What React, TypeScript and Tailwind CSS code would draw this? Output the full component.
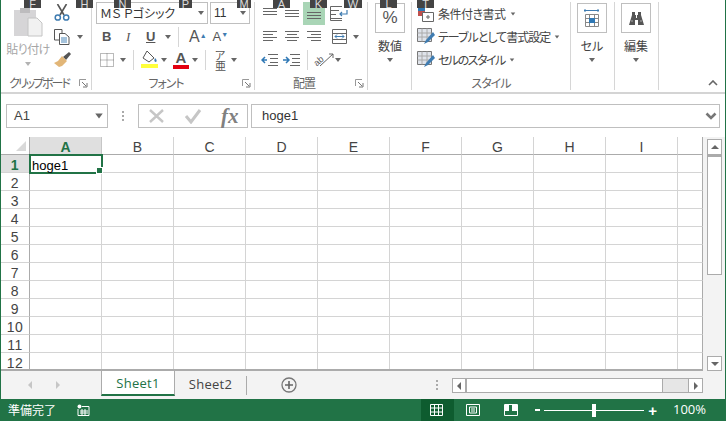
import React from "react"

const jp = "[font-family:'Noto_Sans_CJK_JP','Liberation_Sans',sans-serif] [font-feature-settings:'palt']"
const COLS = ["A", "B", "C", "D", "E", "F", "G", "H", "I"]
const ROWS = [1, 2, 3, 4, 5, 6, 7, 8, 9, 10, 11, 12]

const Caret = ({ className = "" }: { className?: string }) => (
  <span className={`inline-block w-0 h-0 border-x-[3.5px] border-x-transparent border-t-[4px] border-t-[#666] ${className}`} />
)

const Launcher = () => (
  <svg width="9" height="9" viewBox="0 0 9 9" className="shrink-0">
    <path d="M0.5 7V0.5H7" fill="none" stroke="#999" />
    <path d="M3 3L7 7M8 4V8H4" fill="none" stroke="#777" />
  </svg>
)

const Lines = ({ rows }: { rows: [number, number, number][] }) => (
  <svg width="18" height="14" viewBox="0 0 18 14">
    {rows.map(([y, x1, x2]) => (
      <path key={y} d={`M${x1} ${y}.5H${x2}`} stroke="#666" />
    ))}
  </svg>
)

const Clipboard = () => (
  <svg width="30" height="30" viewBox="0 0 30 30">
    <rect x="1" y="2" width="22" height="26" fill="#d6d5d7" />
    <rect x="7" y="0" width="10" height="5" fill="#bdbcbe" />
    <path d="M15 10H24L29 15V28H15Z" fill="#f1f1f1" stroke="#c4c4c4" />
  </svg>
)

const Scissors = () => (
  <svg width="16" height="18" viewBox="0 0 16 18">
    <path d="M3.5 0L10 11M12.5 0L6 11" stroke="#555" strokeWidth="1.6" fill="none" />
    <circle cx="3.8" cy="13.5" r="2.6" fill="none" stroke="#3f7cb1" strokeWidth="1.5" />
    <circle cx="12.2" cy="13.5" r="2.6" fill="none" stroke="#3f7cb1" strokeWidth="1.5" />
  </svg>
)

const Copy = () => (
  <svg width="16" height="16" viewBox="0 0 16 16">
    <path d="M0.5 0.5H8V11H0.5Z" fill="#fff" stroke="#555" />
    <path d="M5.5 4.5H11L15 8V15.5H5.5Z" fill="#fff" stroke="#555" />
    <path d="M7 9H13M7 11H13M7 13H13" stroke="#4a86b8" />
  </svg>
)

const Brush = () => (
  <svg width="17" height="16" viewBox="0 0 17 16">
    <path d="M9 5L15 0L17 2L12 8Z" fill="#555" />
    <path d="M8 4L13 9L8 14L5 15L0 11L4 9Z" fill="#e2b678" />
  </svg>
)

const Borders = () => (
  <svg width="14" height="14" viewBox="0 0 14 14">
    <path d="M0.5 0.5H13.5V13.5H0.5ZM7 0.5V13.5M0.5 7H13.5" fill="none" stroke="#777" strokeDasharray="1 1" />
  </svg>
)

const Bucket = () => (
  <svg width="17" height="19" viewBox="0 0 17 19">
    <path d="M6 1L13 8L8 12L2 8Z" fill="#fff" stroke="#555" />
    <path d="M14 8C16 10 16 11 15 12C13 12 13 10 14 8Z" fill="#3f7cb1" />
    <rect x="0" y="14" width="17" height="4" fill="#ffff3b" />
  </svg>
)

const FontColor = () => (
  <div className="flex flex-col items-center w-[16px]">
    <span className="text-[15px] leading-[13px] font-bold text-[#555] font-['Liberation_Sans',sans-serif]">A</span>
    <span className="w-[16px] h-[4px] bg-[#e3000f] mt-[1px]" />
  </div>
)

const Wrap = () => (
  <svg width="18" height="16" viewBox="0 0 18 16">
    <path d="M0.5 0.5H12M0.5 4.5H9M0.5 8.5H6M0.5 12.5H12M0.5 0.5V14.5H12" fill="none" stroke="#666" />
    <path d="M17 4V8H10M12 6L10 8L12 10" fill="none" stroke="#3f7cb1" strokeWidth="1.2" />
  </svg>
)

const Merge = () => (
  <svg width="15" height="15" viewBox="0 0 15 15">
    <path d="M0.5 0.5H14.5V14.5H0.5ZM0.5 4.5H14.5M0.5 10.5H14.5" fill="none" stroke="#666" />
    <path d="M3 7.5H12M5 5.5L3 7.5L5 9.5M10 5.5L12 7.5L10 9.5" fill="none" stroke="#3f7cb1" />
  </svg>
)

const Indent = ({ flip }: { flip?: boolean }) => (
  <svg width="18" height="12" viewBox="0 0 18 12">
    <path d="M7 0.5H17M9 4.5H17M9 8.5H17M7 11.5H17" stroke="#666" />
    <path d={flip ? "M0 6H5M3 3L6 6L3 9" : "M6 6H1M4 3L1 6L4 9"} fill="none" stroke="#2f78b5" strokeWidth="1.5" />
  </svg>
)

const Orient = () => (
  <svg width="20" height="18" viewBox="0 0 20 18">
    <path d="M6 15L19 3M15 3H19V7" fill="none" stroke="#666" />
    <text x="0" y="12" fontSize="9" fill="#555" transform="rotate(-40 6 10)" fontFamily="Liberation Sans">ab</text>
  </svg>
)

const Conditional = () => (
  <svg width="16" height="16" viewBox="0 0 16 16">
    <rect x="0" y="0" width="7" height="5" fill="#2f78b5" />
    <rect x="0" y="5" width="7" height="5" fill="#c0504d" />
    <path d="M4.5 6.5H15.5V15.5H4.5Z" fill="#fff" stroke="#666" />
    <path d="M8 11H12M10 9V13" stroke="#666" />
  </svg>
)

const StyleTable = () => (
  <svg width="18" height="18" viewBox="0 0 18 18">
    <path d="M0.5 0.5H14.5V13.5H0.5Z" fill="#dfe3ea" stroke="#777" />
    <path d="M5 0.5V13.5M10 0.5V13.5M0.5 5H14.5M0.5 9H14.5" stroke="#aaa" />
    <path d="M16 4L9 12L7 16L11 14L18 7Z" fill="#3f7cb1" />
  </svg>
)

const CellIcon = () => (
  <svg width="16" height="18" viewBox="0 0 16 18">
    <path d="M0 1.5H15M1 0V3M14 0V3" stroke="#3f7cb1" />
    <path d="M1.5 5.5H14.5V17.5H1.5ZM1.5 9.5H14.5M1.5 13.5H14.5M5.5 5.5V17.5M10.5 5.5V17.5" fill="#fff" stroke="#888" />
    <rect x="5" y="9" width="6" height="5" fill="#2f78b5" />
  </svg>
)

const Binoculars = () => (
  <svg width="15" height="13" viewBox="0 0 15 13">
    <path d="M3 0H6V3H7V6H8V3H9V0H12V3L15 13H9V8H6V13H0L3 3Z" fill="#555" />
    <path d="M2 9H4M11 9H13" stroke="#aaa" />
  </svg>
)

const Group = ({ width, label, launcher, tight, children }: { width: number; label?: string; launcher?: boolean; tight?: boolean; children: React.ReactNode }) => (
  <div className="flex flex-col h-[88px] border-r border-[#d6d6d6] shrink-0" style={{ width }}>
    <div className="h-[74px] overflow-hidden">{children}</div>
    <div className={`h-[14px] flex items-center justify-center relative ${launcher ? "pr-[14px]" : ""}`}>
      <span className={`${jp} text-[12px] leading-[14px] ${tight ? "tracking-[-2px]" : "tracking-[-1px]"} text-[#666] whitespace-nowrap`}>{label}</span>
      {launcher && (
        <span className="absolute right-[3px] top-[3px]">
          <Launcher />
        </span>
      )}
    </div>
  </div>
)

const BigButton = ({ label, children }: { label: string; children: React.ReactNode }) => (
  <div className="flex flex-col items-center w-[30px]">
    <div className="w-[30px] h-[30px] border border-[#bfbfbf] flex items-center justify-center">{children}</div>
    <span className={`${jp} text-[12px] leading-[16px] text-[#444] mt-[5px] whitespace-nowrap`}>{label}</span>
    <Caret className="mt-[4px]" />
  </div>
)

const StyleRow = ({ label, tracking, children }: { label: string; tracking: string; children: React.ReactNode }) => (
  <div className="flex items-center h-[23px] gap-[3px]">
    <span className="w-[18px] flex justify-center">{children}</span>
    <span className={`${jp} text-[12px] ${tracking} text-[#444] whitespace-nowrap`}>{label}</span>
    <Caret className="scale-75 ml-[1px]" />
  </div>
)

const KeyTips = () => (
  <>
    {[
      ["F", 23, 17],
      ["H", 75, 17],
      ["N", 113, 17],
      ["P", 178, 13],
      ["M", 236, 14],
      ["A", 272, 17],
      ["K", 309, 17],
      ["W", 343, 18],
      ["L", 379, 17],
      ["T", 416, 17],
    ].map(([k, left, w]) => (
      <span
        key={k}
        className="absolute top-0 h-[8px] bg-[#444] overflow-hidden flex justify-center items-end text-[#ddd] text-[11px] leading-[8px] font-['Liberation_Sans',sans-serif]"
        style={{ left: Number(left), width: Number(w) }}
      >
        {k}
      </span>
    ))}
  </>
)

const Ribbon = () => (
  <div className="relative h-[94px] shrink-0 border-b-2 border-[#d4d4d4] flex pt-[2px] bg-white">
    <KeyTips />
    <Group width={91} label="クリップボード" launcher tight>
      <div className="flex pl-[7px]">
        <div className="flex flex-col items-center w-[40px] pt-[6px]">
          <Clipboard />
          <span className={`${jp} text-[12px] tracking-[-0.5px] leading-[16px] text-[#a6a6a6] mt-[3px] whitespace-nowrap`}>貼り付け</span>
          <Caret className="mt-[5px] opacity-50" />
        </div>
        <div className="flex flex-col pl-[6px] pt-[2px] gap-[7px]">
          <Scissors />
          <div className="flex items-center gap-[7px]">
            <Copy />
            <Caret />
          </div>
          <Brush />
        </div>
      </div>
    </Group>
    <Group width={163} label="フォント" launcher>
      <div className="flex flex-col pl-[4px]">
        <div className="flex gap-[2px] h-[22px] text-[#333]">
          <div className={`${jp} w-[112px] border border-[#bfbfbf] flex items-center justify-between px-[3px] text-[12px]`}>
            <span>ＭＳ Ｐゴシック</span>
            <Caret />
          </div>
          <div className="w-[40px] border border-[#bfbfbf] flex items-center justify-between px-[3px] text-[12px] font-['Liberation_Sans',sans-serif]">
            <span>11</span>
            <Caret />
          </div>
        </div>
        <div className="flex items-center h-[23px] mt-[1px] text-[#555] font-['Liberation_Serif',serif]">
          <span className="w-[10px] ml-[6px] text-[13px] font-bold font-['Liberation_Sans',sans-serif]">B</span>
          <span className="w-[10px] ml-[14px] text-[13px] italic">I</span>
          <span className="w-[10px] ml-[10px] text-[13px] font-bold underline font-['Liberation_Sans',sans-serif]">U</span>
          <Caret className="ml-[9px]" />
          <span className="w-px h-[20px] bg-[#d6d6d6] ml-[7px]" />
          <span className="ml-[10px] text-[16px] font-['Liberation_Sans',sans-serif]">A<sup className="text-[#3f7cb1] text-[7px]">▲</sup></span>
          <span className="ml-[6px] text-[13px] font-['Liberation_Sans',sans-serif]">A<sup className="text-[#3f7cb1] text-[7px]">▼</sup></span>
        </div>
        <div className="flex items-center h-[23px]">
          <span className="ml-[4px]">
            <Borders />
          </span>
          <Caret className="ml-[6px]" />
          <span className="w-px h-[20px] bg-[#d6d6d6] ml-[7px]" />
          <span className="ml-[7px]">
            <Bucket />
          </span>
          <Caret className="ml-[3px]" />
          <span className="ml-[6px]">
            <FontColor />
          </span>
          <Caret className="ml-[3px]" />
          <span className="w-px h-[20px] bg-[#d6d6d6] ml-[7px]" />
          <span className={`${jp} ml-[9px] text-[11px] leading-[10px] w-[10px] text-[#555]`}>ア亜</span>
          <Caret className="ml-[6px]" />
        </div>
      </div>
    </Group>
    <Group width={113} label="配置" launcher>
      <div className="flex flex-col pl-[4px]">
        <div className="flex items-center h-[23px]">
          <span className="w-[22px] flex justify-center">
            <Lines rows={[[1, 2, 16], [4, 2, 16], [7, 2, 16]]} />
          </span>
          <span className="w-[22px] flex justify-center">
            <Lines rows={[[3, 2, 16], [6, 2, 16], [9, 2, 16]]} />
          </span>
          <span className="w-[22px] h-[23px] bg-[#a9d5b6] flex justify-center items-center">
            <Lines rows={[[5, 2, 16], [8, 2, 16], [11, 2, 16]]} />
          </span>
          <span className="w-[28px] flex justify-center">
            <Wrap />
          </span>
        </div>
        <div className="flex items-center h-[23px]">
          <span className="w-[22px] flex justify-center">
            <Lines rows={[[1, 2, 16], [4, 2, 12], [7, 2, 16], [10, 2, 12]]} />
          </span>
          <span className="w-[22px] flex justify-center">
            <Lines rows={[[1, 2, 16], [4, 4, 14], [7, 2, 16], [10, 4, 14]]} />
          </span>
          <span className="w-[22px] flex justify-center">
            <Lines rows={[[1, 2, 16], [4, 6, 16], [7, 2, 16], [10, 6, 16]]} />
          </span>
          <span className="w-[28px] flex justify-center">
            <Merge />
          </span>
          <Caret />
        </div>
        <div className="flex items-center h-[23px]">
          <span className="w-[22px] flex justify-center">
            <Indent />
          </span>
          <span className="w-[22px] flex justify-center">
            <Indent flip />
          </span>
          <span className="w-px h-[20px] bg-[#d6d6d6] ml-[4px]" />
          <span className="ml-[6px]">
            <Orient />
          </span>
          <Caret className="ml-[1px]" />
        </div>
      </div>
    </Group>
    <Group width={44}>
      <div className="pl-[7px] pt-[1px]">
        <BigButton label="数値">
          <span className="text-[17px] text-[#555] font-['Liberation_Sans',sans-serif]">%</span>
        </BigButton>
      </div>
    </Group>
    <Group width={159} label="スタイル">
      <div className="flex flex-col pl-[5px]">
        <StyleRow label="条件付き書式" tracking="tracking-[-0.5px]">
          <Conditional />
        </StyleRow>
        <StyleRow label="テーブルとして書式設定" tracking="tracking-[-1px]">
          <StyleTable />
        </StyleRow>
        <StyleRow label="セルのスタイル" tracking="tracking-[-1.5px]">
          <StyleTable />
        </StyleRow>
      </div>
    </Group>
    <Group width={44}>
      <div className="pl-[6px] pt-[1px]">
        <BigButton label="セル">
          <CellIcon />
        </BigButton>
      </div>
    </Group>
    <Group width={44}>
      <div className="pl-[6px] pt-[1px]">
        <BigButton label="編集">
          <Binoculars />
        </BigButton>
      </div>
    </Group>
    <div className="flex-1 flex items-end justify-end pr-[7px] pb-[6px]">
      <svg width="10" height="6" viewBox="0 0 10 6">
        <path d="M1 5L5 1L9 5" fill="none" stroke="#666" strokeWidth="1.6" />
      </svg>
    </div>
  </div>
)

const FormulaBar = () => (
  <div className="h-[43px] shrink-0 flex items-center pl-[5px] pr-[5px] bg-white">
    <div className="w-[102px] h-[24px] border border-[#bfbfbf] flex items-center justify-between pl-[7px] pr-[5px] text-[13px] text-[#444] font-['Liberation_Sans',sans-serif]">
      <span>A1</span>
      <Caret className="scale-125" />
    </div>
    <div className="w-[30px] flex flex-col items-center gap-[2px]">
      <span className="w-[2px] h-[2px] bg-[#aaa]" />
      <span className="w-[2px] h-[2px] bg-[#aaa]" />
      <span className="w-[2px] h-[2px] bg-[#aaa]" />
    </div>
    <div className="w-[110px] h-[24px] border border-[#bfbfbf] flex items-center pl-[9px] gap-[19px]">
      <svg width="17" height="16" viewBox="0 0 17 16">
        <path d="M2 2L15 14M15 2L2 14" stroke="#c6c6c6" strokeWidth="2.4" />
      </svg>
      <svg width="18" height="16" viewBox="0 0 18 16">
        <path d="M2 8L7 14L16 2" fill="none" stroke="#c6c6c6" strokeWidth="3" />
      </svg>
      <span className="text-[21px] leading-[20px] italic font-bold text-[#808080] font-['Liberation_Serif',serif]">fx</span>
    </div>
    <div className="flex-1 ml-[3px] h-[24px] border border-[#bfbfbf] flex items-center justify-between pl-[10px] pr-[2px] text-[13px] text-[#333] font-['Liberation_Sans',sans-serif]">
      <span>hoge1</span>
      <svg width="12" height="8" viewBox="0 0 12 8">
        <path d="M1.5 1.5L6 6L10.5 1.5" fill="none" stroke="#777" strokeWidth="2.6" />
      </svg>
    </div>
  </div>
)

const SheetGrid = () => (
  <div className="relative w-[702px] h-[234px] overflow-hidden border-b-2 border-[#ababab]">
    <div className="grid grid-cols-[29px_repeat(9,72px)_25px] auto-rows-[18px] font-['Liberation_Sans',sans-serif]">
      <div className="h-[18px] bg-white border-r border-b border-[#ababab] flex items-end justify-end pr-[3px] pb-[3px]">
        <span className="w-0 h-0 border-l-[10px] border-l-transparent border-b-[10px] border-b-[#d9d9d9]" />
      </div>
      {COLS.map((c) => (
        <div
          key={c}
          className={`flex items-center justify-center pt-[3px] text-[14px] border-r border-b ${
            c === "A" ? "bg-[#dfdfdf] text-[#217346] font-bold border-r-[#c6c6c6] border-b-[#ababab]" : "text-[#444] border-r-[#d4d4d4] border-b-[#ababab]"
          }`}
        >
          {c}
        </div>
      ))}
      <div className="border-b border-[#ababab] border-r border-r-[#ababab]" />
      {ROWS.map((r) => (
        <React.Fragment key={r}>
          <div
            className={`flex items-center justify-center pt-[3px] text-[14px] tracking-[0.5px] border-r border-b border-b-[#d4d4d4] border-r-[#ababab] ${
              r === 1 ? "bg-[#dfdfdf] text-[#217346] font-bold" : "text-[#444]"
            }`}
          >
            {r}
          </div>
          {COLS.map((c) => (
            <div key={c} className="border-r border-b border-[#d4d4d4]" />
          ))}
          <div className="border-b border-[#d4d4d4] border-r border-r-[#ababab]" />
        </React.Fragment>
      ))}
    </div>
    <div className="absolute left-[28px] top-[17px] w-[74px] h-[20px] border-2 border-[#217346] flex items-center pl-[1px] pt-[3px] text-[13px] text-black font-['Liberation_Sans',sans-serif]">
      hoge1
      <span className="absolute right-[-2px] bottom-[-2px] w-[5px] h-[5px] bg-[#217346] border border-white box-content" />
    </div>
  </div>
)

const VScroll = () => (
  <div className="flex-1 flex flex-col pl-[4px] pr-[3px] pt-[2px] bg-[#f3f3f3] h-[234px]">
    <div className="h-[16px] border border-[#ababab] bg-white flex items-center justify-center shrink-0">
      <span className="w-0 h-0 border-x-[4px] border-x-transparent border-b-[4px] border-b-[#666]" />
    </div>
    <div className="h-[120px] border border-[#ababab] border-t-2 bg-white shrink-0" />
    <div className="flex-1" />
    <div className="h-[15px] border border-[#ababab] bg-white flex items-center justify-center shrink-0">
      <span className="w-0 h-0 border-x-[4px] border-x-transparent border-t-[4px] border-t-[#666]" />
    </div>
  </div>
)

const TabBar = () => (
  <div className="h-[28px] shrink-0 bg-[#f3f3f3] flex items-center font-['Open_Sans','Liberation_Sans',sans-serif] text-[13px] tracking-[0.3px]">
    <div className="w-[100px] flex items-center pl-[27px] gap-[24px] shrink-0">
      <span className="w-0 h-0 border-y-[4px] border-y-transparent border-r-[4px] border-r-[#c6c6c6]" />
      <span className="w-0 h-0 border-y-[4px] border-y-transparent border-l-[4px] border-l-[#c6c6c6]" />
    </div>
    <div className="w-[74px] h-[26px] -mt-[4px] pt-[4px] bg-white border-x border-b-2 border-x-[#ababab] border-b-[#217346] flex items-center justify-center text-[#217346] shrink-0">
      Sheet1
    </div>
    <div className="w-[72px] h-[19px] border-r border-[#ababab] flex items-center justify-center text-[#444] shrink-0">Sheet2</div>
    <div className="w-[84px] flex justify-center shrink-0">
      <svg width="16" height="16" viewBox="0 0 16 16">
        <circle cx="8" cy="8" r="7" fill="none" stroke="#777" strokeWidth="1.3" />
        <path d="M8 4V12M4 8H12" stroke="#666" strokeWidth="1.6" />
      </svg>
    </div>
    <div className="flex-1 flex flex-col items-end pr-[14px] gap-[2px]">
      <span className="w-[2px] h-[2px] bg-[#aaa]" />
      <span className="w-[2px] h-[2px] bg-[#aaa]" />
      <span className="w-[2px] h-[2px] bg-[#aaa]" />
    </div>
    <div className="w-[251px] h-[15px] mt-[1px] mr-[22px] border border-[#ababab] flex shrink-0 bg-[#e6e6e6]">
      <span className="w-[14px] bg-white border-r-2 border-[#ababab] flex items-center justify-center">
        <span className="w-0 h-0 border-y-[4px] border-y-transparent border-r-[4px] border-r-[#666]" />
      </span>
      <span className="w-[196px] bg-white border-r border-[#ababab]" />
      <span className="flex-1" />
      <span className="w-[14px] bg-white border-l border-[#ababab] flex items-center justify-center">
        <span className="w-0 h-0 border-y-[4px] border-y-transparent border-l-[4px] border-l-[#666]" />
      </span>
    </div>
  </div>
)

const StatusBar = () => (
  <div className="h-[22px] shrink-0 bg-[#217346] flex items-center text-white -mx-px">
    <span className={`${jp} ml-[8px] text-[12px]`}>準備完了</span>
    <svg width="13" height="12" viewBox="0 0 13 12" className="ml-[21px]">
      <path d="M1 2H3M5 2.5H12V11.5H1V5" fill="none" stroke="#fff" />
      <circle cx="2.5" cy="2.5" r="2" fill="#fff" />
      <path d="M3 7H11M3 9H11M5 5V11M8 5V11" stroke="#fff" />
    </svg>
    <div className="ml-auto w-[33px] h-[22px] bg-[#0e5c2f] flex items-center justify-center pr-[3px] mr-[4px]">
      <svg width="13" height="12" viewBox="0 0 13 12">
        <path d="M0.5 0.5H12.5V11.5H0.5ZM4.5 0.5V11.5M8.5 0.5V11.5M0.5 4H12.5M0.5 8H12.5" fill="none" stroke="#fff" />
      </svg>
    </div>
    <svg width="14" height="12" viewBox="0 0 14 12" className="ml-[8px]">
      <path d="M0.5 0.5H13.5V11.5H0.5ZM3.5 3H10.5V9H3.5ZM5 5H9M5 7H9" fill="none" stroke="#fff" />
    </svg>
    <svg width="14" height="12" viewBox="0 0 14 12" className="ml-[24px]">
      <path d="M0.5 0.5H13.5V11.5H0.5Z" fill="none" stroke="#fff" />
      <path d="M1 1H5V7H1ZM8 1H13V7H8Z" fill="#fff" />
    </svg>
    <span className="ml-[17px] w-[5px] h-[2px] bg-white" />
    <div className="relative w-[100px] h-[1px] bg-white ml-[4px]">
      <span className="absolute left-[48px] top-[-6px] w-[4px] h-[13px] bg-white" />
    </div>
    <span className="ml-[4px] text-[15px] font-bold leading-none font-['Liberation_Sans',sans-serif]">+</span>
    <span className="ml-[16px] mr-[20px] text-[13px] font-['Open_Sans','Liberation_Sans',sans-serif]">100%</span>
  </div>
)

export default function App() {
  return (
    <div className="w-[726px] h-[421px] overflow-hidden bg-white border-x border-[#217346] flex flex-col">
      <Ribbon />
      <FormulaBar />
      <div className="flex shrink-0">
        <SheetGrid />
        <VScroll />
      </div>
      <TabBar />
      <StatusBar />
    </div>
  )
}
